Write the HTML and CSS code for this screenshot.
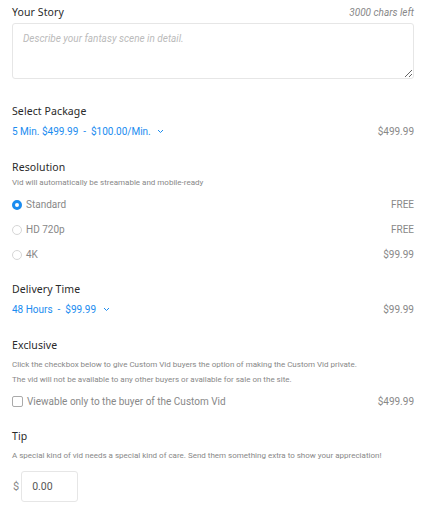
FILE: index.html
```html
<!DOCTYPE html>
<html lang="en">
<head>
  <meta charset="UTF-8">
  <title>Custom Vid</title>
  <link rel="stylesheet" href="styles.css">
</head>
<body>
  <div class="form">
    <div class="section story">
      <div class="row">
        <h3>Your Story</h3>
        <span class="chars">3000 chars left</span>
      </div>
      <textarea placeholder="Describe your fantasy scene in detail."></textarea>
    </div>

    <div class="section">
      <h3>Select Package</h3>
      <div class="row pick">
        <span class="link">5 Min. $499.99 &nbsp;- &nbsp;$100.00/Min. <svg class="caret" width="7" height="5" viewBox="0 0 7 5"><path d="M1 1l2.5 2.5L6 1" fill="none" stroke="currentColor" stroke-width="1"/></svg></span>
        <span class="price">$499.99</span>
      </div>
    </div>

    <div class="section res">
      <h3>Resolution</h3>
      <p class="note">Vid will automatically be streamable and mobile-ready</p>
      <div class="options">
        <label class="row option"><span class="radio on"></span><span class="opt">Standard</span><span class="price">FREE</span></label>
        <label class="row option"><span class="radio"></span><span class="opt">HD 720p</span><span class="price">FREE</span></label>
        <label class="row option"><span class="radio"></span><span class="opt">4K</span><span class="price">$99.99</span></label>
      </div>
    </div>

    <div class="section">
      <h3>Delivery Time</h3>
      <div class="row pick">
        <span class="link">48 Hours &nbsp;- &nbsp;$99.99 <svg class="caret" width="7" height="5" viewBox="0 0 7 5"><path d="M1 1l2.5 2.5L6 1" fill="none" stroke="currentColor" stroke-width="1"/></svg></span>
        <span class="price">$99.99</span>
      </div>
    </div>

    <div class="section excl">
      <h3>Exclusive</h3>
      <div class="notes">
        <p class="note">Click the checkbox below to give Custom Vid buyers the option of making the Custom Vid private.</p>
        <p class="note">The vid will not be available to any other buyers or available for sale on the site.</p>
      </div>
      <label class="row check"><span class="box"></span><span class="opt">Viewable only to the buyer of the Custom Vid</span><span class="price">$499.99</span></label>
    </div>

    <div class="section">
      <h3>Tip</h3>
      <div class="notes">
        <p class="note">A special kind of vid needs a special kind of care. Send them something extra to show your appreciation!</p>
      </div>
      <div class="tip">
        <span class="dollar">$</span>
        <input type="text" value="0.00">
      </div>
    </div>
  </div>
</body>
</html>
```

FILE: styles.css
```css
body {
  margin: 0;
  background: #fff;
  font-family: Roboto, "Liberation Sans", sans-serif;
  color: #888;
}
.form {
  width: 402px;
  padding: 4px 0 0 12px;
}
.row {
  display: flex;
  align-items: center;
  justify-content: space-between;
}
h3 {
  margin: 0;
  font-family: "Noto Sans", sans-serif;
  font-size: 10.5px;
  font-weight: 400;
  color: #2a2a2a;
  letter-spacing: 0.1px;
  line-height: 16px;
}
.section {
  margin-bottom: 20px;
}
.story {
  margin-bottom: 24px;
}
.res {
  margin-bottom: 14px;
}
.excl {
  margin-bottom: 17px;
}
.chars {
  font-size: 10px;
  font-style: italic;
  color: #888;
}
textarea {
  display: block;
  box-sizing: border-box;
  width: 402px;
  height: 56px;
  margin-top: 3px;
  padding: 9px 10px;
  border: 1px solid #e6e6e6;
  border-radius: 3px;
  font-family: Roboto, sans-serif;
  font-size: 10px;
  font-style: italic;
  resize: vertical;
}
textarea::placeholder {
  color: #bbb;
}
.pick {
  margin-top: 4px;
  height: 16px;
}
.link {
  color: #1a8cf0;
  font-size: 10px;
}
.caret {
  margin-left: 4px;
  vertical-align: 1px;
}
.price {
  font-size: 10px;
  color: #888;
}
.note {
  margin: 0;
  font-size: 8px;
  line-height: 15px;
  color: #888;
}
.res .note {
  margin-top: 1px;
  line-height: 14px;
}
.notes {
  margin-top: 4px;
}
.options {
  margin-top: 2px;
}
.option {
  height: 25px;
}
.opt {
  flex: 1;
  font-size: 10px;
  color: #888;
}
.radio {
  width: 10px;
  height: 10px;
  border: 1px solid #d6d6d6;
  border-radius: 50%;
  margin-right: 4px;
  box-sizing: border-box;
}
.radio.on {
  border: 3px solid #1a8cf0;
}
.check {
  height: 20px;
  margin-top: 4px;
}
.box {
  width: 11px;
  height: 11px;
  box-sizing: border-box;
  border: 1px solid #aaa;
  border-radius: 2px;
  margin-right: 4px;
}
.tip {
  display: flex;
  align-items: center;
  margin-top: 8px;
}
.dollar {
  font-size: 11px;
  color: #888;
  margin: 0 2px 0 1px;
}
.tip input {
  box-sizing: border-box;
  width: 57px;
  height: 31px;
  padding: 0 10px;
  border: 1px solid #e6e6e6;
  border-radius: 3px;
  font-family: Roboto, sans-serif;
  font-size: 10.5px;
  color: #555;
}
```
